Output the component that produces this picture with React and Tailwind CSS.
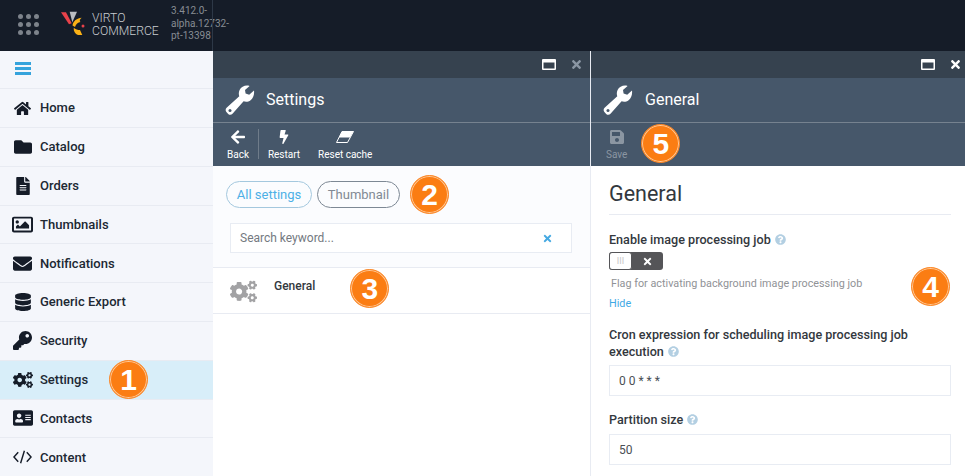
import React from "react";
import { FaHome, FaFolder, FaFileAlt, FaRegImage, FaEnvelope, FaDatabase, FaKey, FaCogs, FaAddressCard, FaArrowLeft, FaBolt, FaSave, FaTimes, FaQuestionCircle } from "react-icons/fa";

function CodeIcon({ style }) {
  return (
    <svg viewBox="0 0 20 14" width="19" height="14" fill="none" stroke="#151c28" strokeWidth="1.5" style={style}>
      <path d="M5.5 2 1 7l4.5 5M14.5 2 19 7l-4.5 5M12 0.5 8 13.5" />
    </svg>
  );
}

const nav = [
  ["Home", FaHome, 17],
  ["Catalog", FaFolder, 18],
  ["Orders", FaFileAlt, 18],
  ["Thumbnails", FaRegImage, 21],
  ["Notifications", FaEnvelope, 19],
  ["Generic Export", FaDatabase, 18],
  ["Security", FaKey, 19],
  ["Settings", FaCogs, 20],
  ["Contacts", FaAddressCard, 20],
  ["Content", CodeIcon, 19],
];

function Badge({ n, className = "" }) {
  return (
    <span className={"flex h-[39px] w-[39px] shrink-0 items-center justify-center rounded-full border border-[#fb8a2c] bg-[#fb7d13] text-[30px] font-bold leading-none text-white shadow-[inset_0_0_0_1px_#ffc998] [font-family:'Liberation_Sans',sans-serif] " + className}>
      {n}
    </span>
  );
}

function Wrench() {
  return (
    <svg viewBox="0 0 30 30" width="30" height="30" className="shrink-0">
      <path d="M29 5.5 24.2 9.8 20.6 8.6 20 5 24.6 0.9C20.8-.3 16.4 1.2 14.6 5c-1 2.2-1 4.4-.3 6.2L1.6 22.8c-1.2 1.100-1.300 3-.2 4.300l1.800 1.800c1.300 1.200 3.200 1.100 4.300-.2L18.600 16.300c2.200.8 4.900.5 7-1.100 2.600-2 3.900-5.700 3.400-9.700z" fill="#fff" />
      <circle cx="5" cy="25.500" r="1.500" fill="#46576a" />
    </svg>
  );
}

function WindowIcon() {
  return (
    <svg viewBox="0 0 14 11" width="14" height="11">
      <path d="M1 0h12a1 1 0 0 1 1 1v9a1 1 0 0 1-1 1H1a1 1 0 0 1-1-1V1a1 1 0 0 1 1-1zm.5 3.500v6h11v-6z" fill="#fff" fillRule="evenodd" />
    </svg>
  );
}

function Eraser() {
  return (
    <svg viewBox="0 0 18 12" width="18" height="12">
      <path d="M6 0.500h11.500L11.500 11.500H0.500z" fill="none" stroke="#fff" strokeWidth="1" />
      <path d="M6 0.500h11.500L14 6.500H3z" fill="#fff" />
    </svg>
  );
}

function BladeHead({ title, closeClass, titleClass, barClass }) {
  return (
    <>
      <div className={"flex h-[27px] items-center justify-end gap-[14px] bg-[#36424f] " + barClass}>
        <WindowIcon />
        <FaTimes className={"text-[13px] " + closeClass} />
      </div>
      <div className="flex h-[45px] items-center border-b border-[#76828f] bg-[#46576a] pl-[12px]">
        <Wrench />
        <span className={"text-[16px] text-white " + titleClass}>{title}</span>
      </div>
    </>
  );
}

function Tool({ icon: Icon, label, size = 15, className = "text-white" }) {
  return (
    <div className={"flex h-full flex-col items-center pt-[5px] " + className}>
      <div className="flex h-[18px] items-center">
        <Icon style={{ fontSize: size }} />
      </div>
      <span className="mt-[3px] text-[10px] leading-[12px]">{label}</span>
    </div>
  );
}

function Help() {
  return <FaQuestionCircle className="ml-[4px] inline-block align-[-1px] text-[11px] text-[#b3cfe2]" />;
}

function Label({ children, className = "" }) {
  return <div className={"text-[12.6px] font-medium leading-[17px] text-[#33383e] " + className}>{children}</div>;
}

function Field({ value }) {
  return <div className="flex h-[31px] items-center border border-[#e8ecf3] bg-white pl-[9px] text-[12px] text-[#4a4f55]">{value}</div>;
}

export default function App() {
  return (
    <div className="flex h-[476px] w-[965px] flex-col overflow-hidden bg-white [font-family:Roboto,sans-serif]">
      <header className="relative flex h-[51px] shrink-0 bg-[#151c28]">
        <div className="flex w-[212px] shrink-0 items-center">
          <div className="ml-[18px] mt-[-3px] grid w-[21px] shrink-0 grid-cols-3 gap-[3px]">
            {Array.from({ length: 9 }).map((_, i) => (
              <span key={i} className="h-[5px] w-[5px] rounded-full bg-[#7d838b]" />
            ))}
          </div>
          <svg width="24" height="25" viewBox="0 0 24 25" className="ml-[22px] mt-[-4px] shrink-0">
            <path d="M0 1.300H5L10.700 12.300 8 13.300z" fill="#e8424a" />
            <path d="M8.700.7H16L11.300 11.300z" fill="#b9bcc0" />
            <path d="M20.700 6.700C16 7 12 10 11.500 14.500L14 16C15 13 17 11.500 19.500 11 18 10 19 8 20.700 6.700z" fill="#fbb116" />
            <path d="M12.700 16.700C14.500 18.500 17 19 19 19L21.300 24H17C14 23 12.500 20 12.700 16.700z" fill="#fbb116" />
            <circle cx="22" cy="15" r="1.500" fill="#e8424a" />
          </svg>
          <div className="ml-[7px] mt-[-2px] w-[68px] shrink-0 text-[12.2px] font-light leading-[13px] text-[#c9ccd0]">
            <div>VIRTO</div>
            <div>COMMERCE</div>
          </div>
          <div className="ml-[11px] mt-[-3px] w-[53px] shrink-0 whitespace-nowrap text-[10px] leading-[12.5px] text-[#878c93]">3.412.0-<br />alpha.12732-<br />pt-13398</div>
        </div>
        <div className="h-full w-px bg-[#2d3847]" />
      </header>
      <div className="flex min-h-0 flex-1">
        <aside className="flex w-[213px] shrink-0 flex-col bg-[#f4f6fb]">
          <div className="flex h-[38.2px] shrink-0 items-center border-b border-[#e8ebf2] pl-[15px] pb-[2px]">
            <div className="flex w-[16px] flex-col gap-[2px]">
              <span className="h-[3px] bg-[#35a3dc]" />
              <span className="h-[3px] bg-[#35a3dc]" />
              <span className="h-[3px] bg-[#35a3dc]" />
            </div>
          </div>
          {nav.map(([name, Icon, size]) => (
            <div key={name} className={"flex h-[38.8px] shrink-0 items-center border-b border-[#e8ebf2] " + (name === "Settings" ? "bg-[#d8eef9]" : "")}>
              <div className="flex w-[40px] shrink-0 justify-center pl-[6px] pr-[1px]">
                <Icon style={{ fontSize: size }} className="text-[#151c28]" />
              </div>
              <span className="text-[13px] font-medium text-[#202833]">{name}</span>
              {name === "Settings" && <Badge n="1" className="ml-[21px]" />}
            </div>
          ))}
        </aside>
        <section className="flex w-[378px] shrink-0 flex-col border-r border-[#e8ebf2]">
          <BladeHead title="Settings" closeClass="text-[#8a96a3]" titleClass="ml-[11px]" barClass="pr-[7px]" />
          <div className="flex h-[43px] items-stretch bg-[#46576a]">
            <div className="flex w-[45px] justify-center pl-[5px]"><Tool icon={FaArrowLeft} label="Back" size={16} /></div>
            <div className="mt-[6px] h-[30px] w-px bg-[#6f7c8a]" />
            <div className="flex w-[50px] justify-center"><Tool icon={FaBolt} label="Restart" size={14} /></div>
            <div className="ml-[9px] flex justify-center"><Tool icon={Eraser} label="Reset cache" /></div>
          </div>
          <div className="h-[102px] border-b border-[#e8ebf2] bg-[#fbfcfe] pl-[13px] pt-[9px]">
            <div className="flex items-center gap-[5px]">
              <span className="flex h-[27px] w-[86px] items-center justify-center rounded-full border border-[#a4c8de] text-[13px] text-[#4db0e6]">All settings</span>
              <span className="flex h-[27px] w-[83px] items-center justify-center rounded-full border border-[#7d8894] text-[13px] text-[#828a94]">Thumbnail</span>
              <Badge n="2" className="ml-[5px]" />
            </div>
            <div className="ml-[4px] mt-[9px] flex h-[30px] w-[342px] items-center justify-between border border-[#e8ecf3] bg-white pl-[9px] pr-[18px] text-[12px] text-[#74797f]">
              <span>Search keyword...</span>
              <FaTimes className="text-[11px] text-[#45a9e2]" />
            </div>
          </div>
          <div className="flex h-[46px] items-start border-b border-[#e8ebf2] bg-white pl-[17px]">
            <FaCogs className="mt-[10px] text-[27px] text-[#a2a2a4]" />
            <span className="ml-[17px] mt-[10px] text-[12px] font-medium leading-[16px] text-[#33383e]">General</span>
            <Badge n="3" className="ml-[35px] mt-[1px]" />
          </div>
        </section>
        <section className="flex min-w-0 flex-1 flex-col">
          <BladeHead title="General" closeClass="text-white" titleClass="ml-[12px]" barClass="pr-[3px]" />
          <div className="flex h-[43px] bg-[#46576a] pl-[15px]">
            <Tool icon={FaSave} label="Save" size={16} className="text-[#8b96a2]" />
            <Badge n="5" className="z-10 ml-[14px] mt-[1px] border-[#3a4656]" />
          </div>
          <div className="flex-1 bg-white pl-[18px] pr-[14px]">
            <h2 className="flex h-[49px] items-center border-b border-[#e8ebf2] pt-[8px] text-[21.5px] font-normal leading-none text-[#33383e]">General</h2>
            <div className="relative">
              <Label className="mt-[16px] leading-[16px]">Enable image processing job<Help /></Label>
              <div className="mt-[4px] flex h-[18px] w-[54px] rounded-[3px] bg-[#555558]">
                <span className="flex w-[23px] items-center justify-center rounded-[3px] border border-[#555558] bg-white text-[9px] leading-none text-[#c9c9c9]">III</span>
                <span className="flex flex-1 items-center justify-center"><FaTimes className="text-[11px] text-white" /></span>
              </div>
              <div className="ml-[2px] mt-[7px] text-[10.8px] leading-[14px] text-[#909296]">Flag for activating background image processing job</div>
              <div className="mt-[6px] text-[10.8px] leading-[14px] text-[#3fa9e5]">Hide</div>
              <Badge n="4" className="absolute right-[1px] top-[36px]" />
              <Label className="mt-[15px]">Cron expression for scheduling image processing job<br />execution<Help /></Label>
              <div className="mt-[5px]"><Field value="0 0 * * *" /></div>
              <Label className="mt-[15px]">Partition size<Help /></Label>
              <div className="mt-[6px]"><Field value="50" /></div>
            </div>
          </div>
        </section>
      </div>
    </div>
  );
}
